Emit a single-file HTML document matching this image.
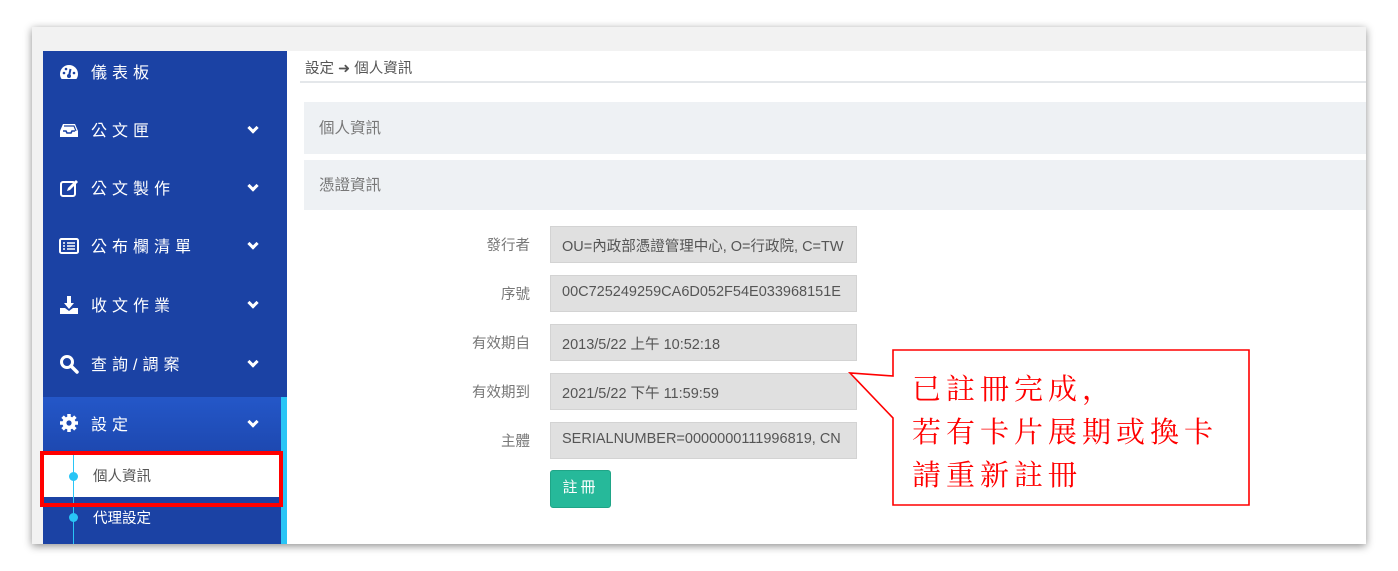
<!DOCTYPE html>
<html><head><meta charset="utf-8"><style>
*{margin:0;padding:0;box-sizing:border-box}
body{width:1398px;height:571px;background:#fff;position:relative;overflow:hidden;font-family:"Liberation Sans","Noto Sans CJK TC",sans-serif}
.frame{position:absolute;left:32px;top:27px;width:1334px;height:517px;background:#f2f2f2;box-shadow:0 2px 8px rgba(0,0,0,.45);overflow:hidden}
.side{position:absolute;left:11px;top:24px;width:244px;height:493px;background:#1b42a4}
.item{position:absolute;left:0;width:244px;height:58px;color:#fff;font-size:16px;letter-spacing:5px;display:flex;align-items:center}
.item .ic{position:absolute;left:16px;top:18px;width:20px;height:20px}
.item .tx{position:absolute;left:48px;top:15px}
.item .ch{position:absolute;left:206px;top:50%;margin-top:-7px;width:8px;height:8px;border-right:3px solid #fff;border-bottom:3px solid #fff;transform:rotate(45deg)}
.main{position:absolute;left:255px;top:24px;width:1079px;height:493px;background:#fff}
.inp{position:absolute;left:263px;width:307px;height:37px;background:#e0e0e0;border:1px solid #d3d3d3;font-size:14.5px;color:#555;padding:8px 11px;white-space:nowrap;overflow:hidden}
.lb{position:absolute;right:836px;font-size:14.5px;color:#777;width:100px;text-align:right}
</style></head><body>
<div class="frame">
 <div class="side">
  <div class="item" style="top:-7px"><svg class="ic" viewBox="0 0 20 20"><path d="M10 3a9 9 0 0 0-9 9c0 2 .6 3.6 1.6 5h14.8c1-1.4 1.6-3 1.6-5a9 9 0 0 0-9-9z" fill="#fff"/><path d="M10 14l1.5-7" stroke="#1b42a4" stroke-width="2"/><circle cx="10" cy="14" r="2" fill="#1b42a4"/><circle cx="5" cy="11" r="1.3" fill="#1b42a4"/><circle cx="15" cy="11" r="1.3" fill="#1b42a4"/><circle cx="7" cy="7" r="1.3" fill="#1b42a4"/></svg><span class="tx">儀表板</span></div>
  <div class="item" style="top:51px"><svg class="ic" viewBox="0 0 20 20"><path d="M4 4h12l3 7v6H1v-6z" fill="#fff"/><path d="M4 11h3l1 2h4l1-2h3" fill="none" stroke="#1b42a4" stroke-width="1.6"/><path d="M5 6h10l2 5" fill="none" stroke="#1b42a4" stroke-width="1.2"/></svg><span class="tx">公文匣</span><span class="ch"></span></div>
  <div class="item" style="top:109px"><svg class="ic" viewBox="0 0 20 20"><rect x="2" y="4" width="14" height="14" rx="2" fill="none" stroke="#fff" stroke-width="2"/><path d="M8 13l1-3 8-8 2 2-8 8z" fill="#fff"/></svg><span class="tx">公文製作</span><span class="ch"></span></div>
  <div class="item" style="top:167px"><svg class="ic" viewBox="0 0 20 20"><rect x="1" y="3" width="18" height="14" rx="1.5" fill="none" stroke="#fff" stroke-width="2"/><path d="M4 7h2M8 7h8M4 10h2M8 10h8M4 13h2M8 13h8" stroke="#fff" stroke-width="1.6"/></svg><span class="tx">公布欄清單</span><span class="ch"></span></div>
  <div class="item" style="top:226px"><svg class="ic" viewBox="0 0 20 20"><path d="M8 1h4v7h3l-5 6-5-6h3z" fill="#fff"/><path d="M1 13h5l4 3 4-3h5v6H1z" fill="#fff"/></svg><span class="tx">收文作業</span><span class="ch"></span></div>
  <div class="item" style="top:285px"><svg class="ic" viewBox="0 0 20 20"><circle cx="8" cy="8" r="5.5" fill="none" stroke="#fff" stroke-width="3"/><path d="M12 12l6 6" stroke="#fff" stroke-width="3.5" stroke-linecap="round"/></svg><span class="tx">查詢/調案</span><span class="ch"></span></div>
  <div class="item" style="top:346px;height:56px;background:linear-gradient(#2457c8,#1d48b0);border-right:6px solid #29c5f6;width:244px"><svg class="ic" viewBox="0 0 20 20" style="top:16px"><circle cx="10" cy="10" r="6.5" fill="#fff"/><path d="M10 1v18M1 10h18M3.6 3.6l12.8 12.8M16.4 3.6L3.6 16.4" stroke="#fff" stroke-width="3.5"/><circle cx="10" cy="10" r="2.6" fill="#1d48b0"/></svg><span class="tx" style="top:14px">設定</span><span class="ch" style="left:206px"></span></div>
  <div style="position:absolute;left:238px;top:402px;width:6px;height:91px;background:#29c5f6"></div>
  <div style="position:absolute;left:0;top:404px;width:238px;height:42px;background:#fff"></div>
  <div style="position:absolute;left:30px;top:402px;width:1px;height:91px;background:#29c5f6"></div>
  <div style="position:absolute;left:-3px;top:400px;width:243px;height:56px;border:4px solid #f00"></div>
  <div style="position:absolute;left:26px;top:421px;width:9px;height:9px;border-radius:50%;background:#29c5f6"></div>
  <div style="position:absolute;left:50px;top:414px;font-size:14.5px;color:#555">個人資訊</div>
  <div style="position:absolute;left:26px;top:462px;width:9px;height:9px;border-radius:50%;background:#29c5f6"></div>
  <div style="position:absolute;left:50px;top:456px;font-size:14.5px;color:#fff">代理設定</div>
 </div>
 <div class="main">
  <div style="position:absolute;left:18px;top:6px;font-size:14.5px;color:#555">設定 ➜ 個人資訊</div>
  <div style="position:absolute;left:13px;top:30px;width:1066px;height:2px;background:#e4e7ea"></div>
  <div style="position:absolute;left:17px;top:51px;width:1062px;height:52px;background:#eef1f4;font-size:15.5px;color:#777;padding:14px 15px">個人資訊</div>
  <div style="position:absolute;left:17px;top:109px;width:1062px;height:50px;background:#eef1f4;font-size:15.5px;color:#777;padding:13px 15px">憑證資訊</div>
  <div class="lb" style="top:183px">發行者</div><div class="inp" style="top:175px">OU=內政部憑證管理中心, O=行政院, C=TW</div>
  <div class="lb" style="top:232px">序號</div><div class="inp" style="top:224px">00C725249259CA6D052F54E033968151E</div>
  <div class="lb" style="top:281px">有效期自</div><div class="inp" style="top:273px">2013/5/22 上午 10:52:18</div>
  <div class="lb" style="top:330px">有效期到</div><div class="inp" style="top:322px">2021/5/22 下午 11:59:59</div>
  <div class="lb" style="top:379px">主體</div><div class="inp" style="top:371px">SERIALNUMBER=0000000111996819, CN</div>
  <div style="position:absolute;left:263px;top:419px;width:61px;height:38px;background:#26b99a;border:1px solid #1fa587;border-radius:3px;color:#fff;font-size:15px;text-align:center;line-height:34px;letter-spacing:3px">註冊</div>
 </div>
</div>
<svg style="position:absolute;left:0;top:0" width="1398" height="571"><path d="M893 350H1249V505H893V418L850 373L893 376Z" fill="#fff" stroke="#f00" stroke-width="1.6"/></svg>
<div style="position:absolute;left:912px;top:366px;font-family:'Noto Serif CJK SC','Noto Serif CJK TC',serif;font-size:29px;line-height:43px;color:#f00;letter-spacing:5px">已註冊完成，<br>若有卡片展期或換卡<br>請重新註冊</div>
</body></html>
